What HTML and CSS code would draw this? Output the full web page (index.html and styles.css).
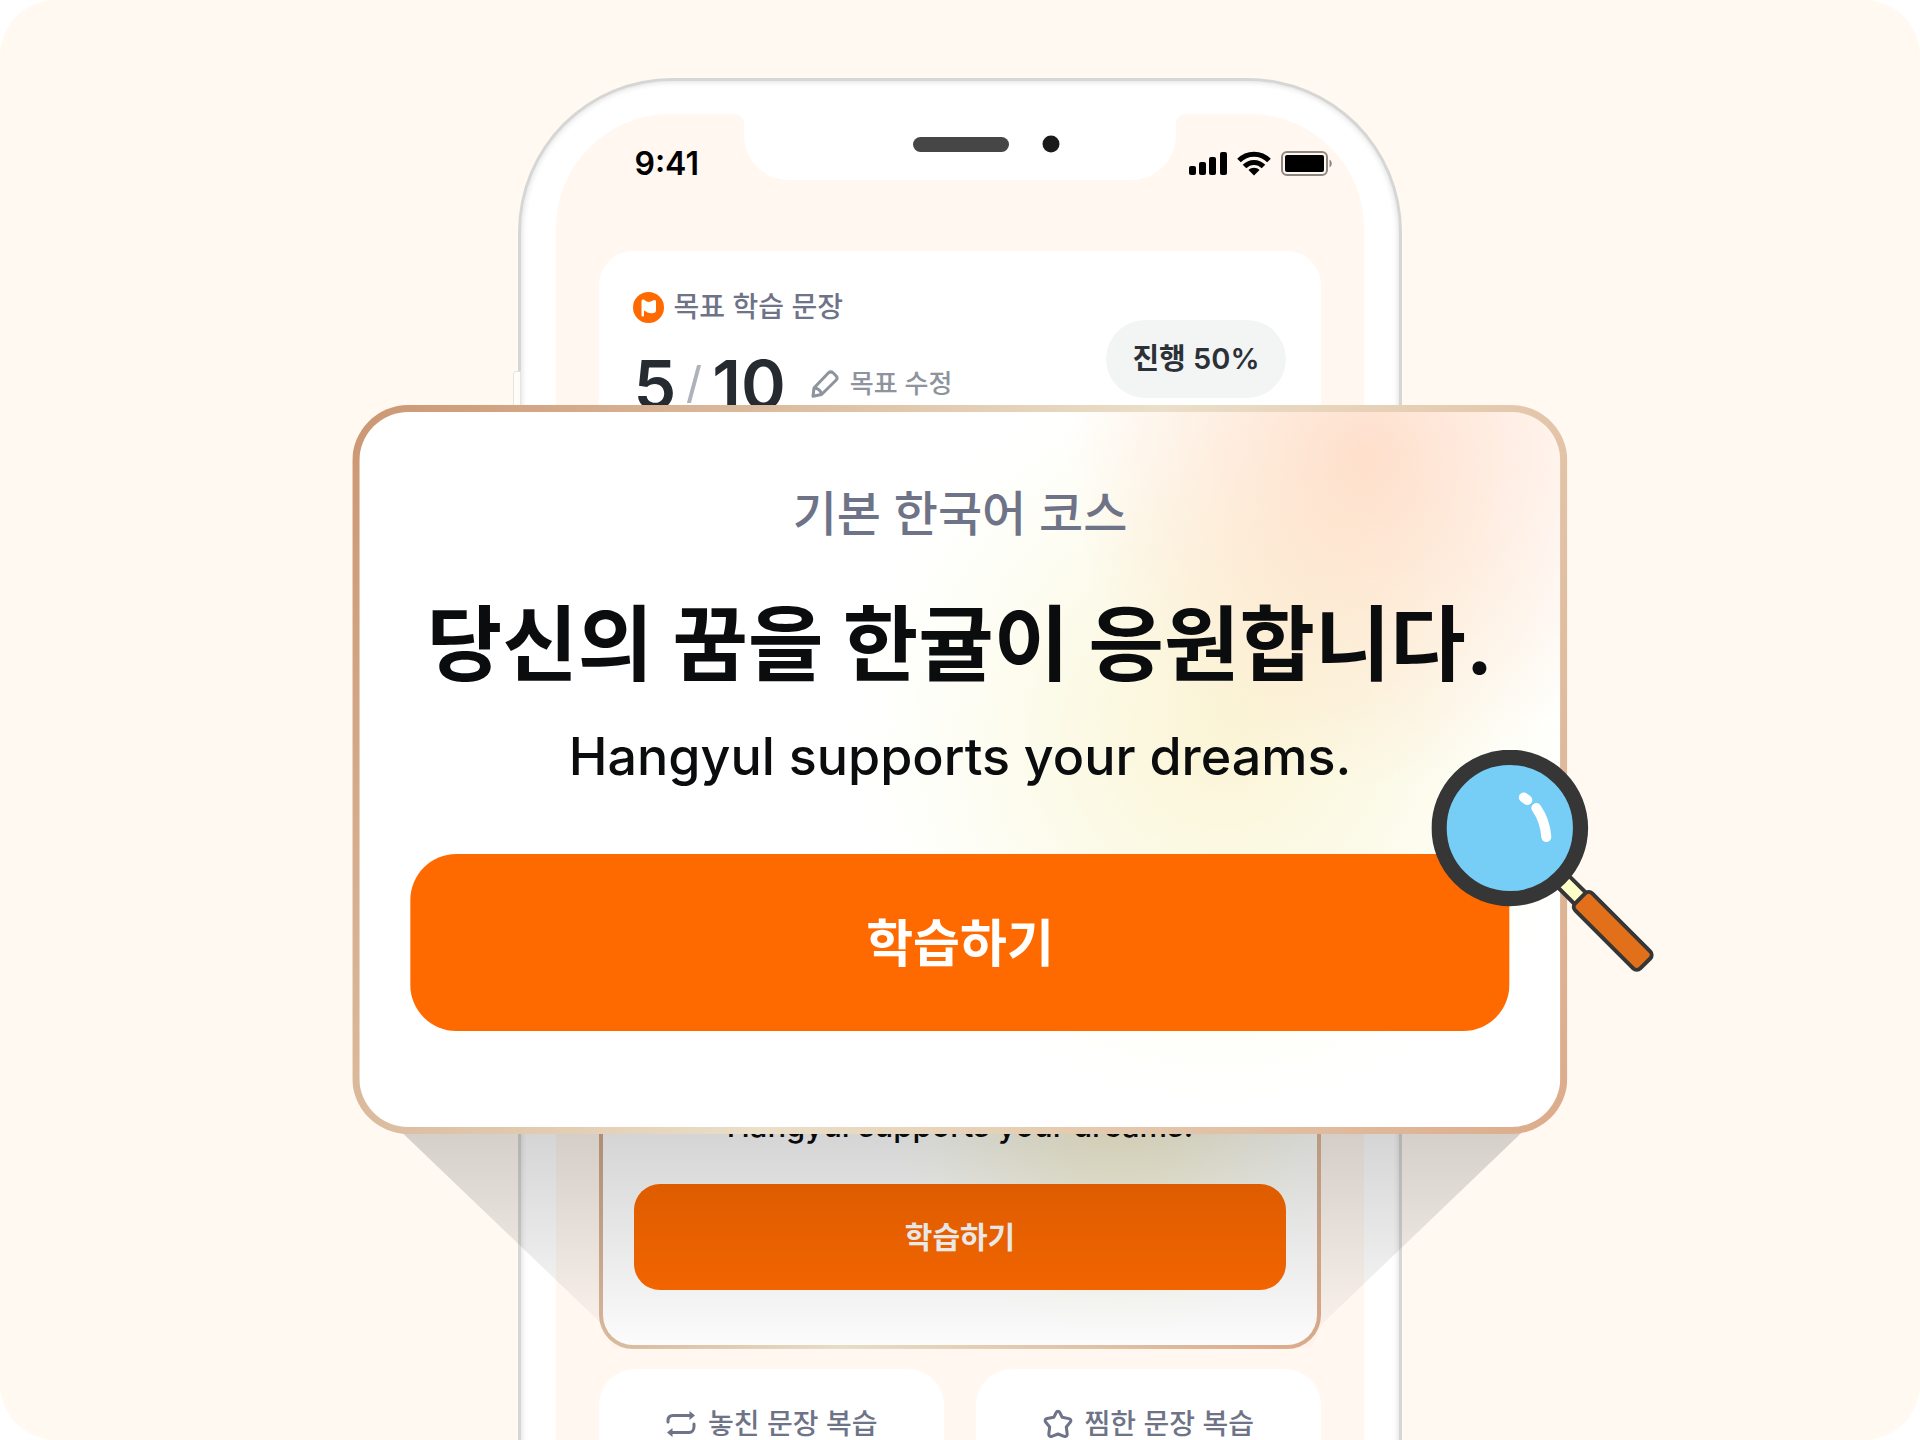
FILE: index.html
```html
<!DOCTYPE html>
<html lang="ko">
<head>
  <meta charset="UTF-8">
  <meta name="viewport" content="width=device-width, initial-scale=1">
  <title>한귤 - 기본 한국어 코스</title>
  <link rel="stylesheet" href="styles.css">
</head>
<body>

<main class="stage">

  <!-- Phone -->
  <div class="phone">
    <div class="screen">
      <svg class="notch" viewBox="0 0 454 66" width="454" height="66" aria-hidden="true">
        <path d="M0 0C7 0 11 4 11 11V20C11 46 30 66 56 66H398C424 66 443 46 443 20V11C443 4 447 0 454 0Z" fill="#fff"/>
        <rect x="180" y="23" width="96" height="15" rx="7.5" fill="#464646"/>
        <circle cx="318" cy="30" r="8.5" fill="#1a1a1a"/>
      </svg>

      <header class="status">
        <span class="time">9:41</span>
        <span class="status-icons">
          <svg width="38" height="25" viewBox="0 0 38 25" aria-hidden="true">
            <rect x="0" y="15" width="7" height="9" rx="2"/>
            <rect x="10" y="11" width="7" height="13" rx="2"/>
            <rect x="20" y="6" width="7" height="18" rx="2"/>
            <rect x="31" y="1" width="7" height="23" rx="2"/>
          </svg>
          <svg width="34" height="25" viewBox="0 0 34 25" aria-hidden="true">
            <g fill="none" stroke="#000" stroke-width="5">
              <path d="M2 9.500C10 1 24 1 32 9.500"/>
              <path d="M7.500 15.500C13 10 21 10 26.500 15.500"/>
            </g>
            <path d="M17 24.500L11.500 19C14.500 16 19.500 16 22.500 19Z"/>
          </svg>
          <svg width="52" height="25" viewBox="0 0 52 25" aria-hidden="true">
            <rect x="1" y="1" width="45" height="23" rx="5" fill="none" stroke="#8d8782" stroke-width="2"/>
            <rect x="4" y="4" width="39" height="17" rx="2"/>
            <path d="M48.500 8.500C51.500 10 51.500 15 48.500 16.500Z" fill="#8d8782"/>
          </svg>
        </span>
      </header>

      <section class="goal">
        <div>
          <h2 class="goal-title">
            <svg width="31" height="31" viewBox="0 0 31 31" aria-hidden="true">
              <circle cx="15.500" cy="15.500" r="15.500" fill="#ff6a00"/>
              <path d="M8.500 9.500C8.500 7.500 10 7 11.500 8C14 10.500 17 10.500 20 8.500C21.500 7.500 23 8 23 9.500V18C23 20 22 21 20.500 21C17 22 14 20.500 11 18.500V23C11 25 8.500 25 8.500 23Z" fill="#fff"/>
            </svg>
            목표 학습 문장
          </h2>
          <div class="goal-row">
            <p class="count">5<i></i>10</p>
            <button class="edit" type="button">
              <svg width="28" height="28" viewBox="0 0 28 28" fill="none" stroke="#8e949d" stroke-width="3" stroke-linejoin="round" aria-hidden="true">
                <path d="M3 18L17.500 2.800C19 1.500 20.500 1.500 22 2.800L25.200 6C26.500 7.500 26.500 8.500 25.200 10L10.500 24.500L2 26.200Z"/>
                <path d="M3 18C7.500 18.500 10 20.500 10.500 24.500"/>
              </svg>
              목표 수정
            </button>
          </div>
        </div>
        <span class="badge">진행 50%</span>
      </section>

      <section class="course course-small">
        <p class="course-en">Hangyul supports your dreams.</p>
        <button class="study" type="button">학습하기</button>
      </section>

      <nav class="review">
        <button class="review-item" type="button">
          <svg width="30" height="28" viewBox="0 0 30 28" fill="none" stroke="#6e7387" stroke-width="3" stroke-linecap="round" aria-hidden="true">
            <path d="M2 12V10.500C2 7 4 5.500 7 5.500H24"/>
            <path d="M28 14V16.500C28 20 26 22.500 23 22.500H6"/>
            <path d="M23.500 1L29 5.500L23.500 10ZM6.500 18L1 22.500L6.500 27Z" fill="#6e7387" stroke="none"/>
          </svg>
          놓친 문장 복습
        </button>
        <button class="review-item" type="button">
          <svg width="30" height="30" viewBox="0 0 30 30" fill="none" stroke="#6e7387" stroke-width="3" stroke-linejoin="round" aria-hidden="true">
            <path d="M13.200 3.500C14 1.800 16 1.800 16.800 3.500L19.200 8.300L25.800 9.600C28 10 28.500 11.800 27.200 13.300L23.300 18L24.200 25C24.300 27 23 28 21.200 27.300L15 25L8.800 27.300C7 28 5.700 27 5.800 25L6.700 18L2.800 13.300C1.500 11.800 2 10 4.200 9.600L10.800 8.300Z"/>
          </svg>
          찜한 문장 복습
        </button>
      </nav>
    </div>
  </div>

  <!-- Beam between the small card and the enlarged one -->
  <div class="beam"></div>

  <!-- Enlarged card -->
  <section class="course course-large">
    <p class="course-name">기본 한국어 코스</p>
    <h1 class="course-title">당신의 꿈을 한귤이 응원합니다.</h1>
    <p class="course-en">Hangyul supports your dreams.</p>
    <button class="study" type="button">학습하기</button>

    <svg class="magnifier" width="226" height="226" viewBox="0 0 226 226" aria-hidden="true">
      <g transform="rotate(45 78.500 78)" stroke="#363636" stroke-width="4">
        <rect x="154" y="70" width="26" height="16" fill="#fdffc8"/>
        <rect x="178" y="66" width="92" height="24" rx="5" fill="#e2701b"/>
      </g>
      <circle cx="78.500" cy="78" r="70.700" fill="#76cef7" stroke="#363636" stroke-width="15.200"/>
      <path d="M92.500 47.500L96 50M105 58Q114 71 115 87" fill="none" stroke="#fff" stroke-width="10" stroke-linecap="round"/>
    </svg>
  </section>

</main>

</body>
</html>
```
FILE: styles.css
```css
* {
  box-sizing: border-box;
}

body {
  margin: 0;
  background: #fff;
  font-family: Inter, 'Noto Sans CJK KR', sans-serif;
  color: #0b0c0e;
}

h1, h2, h3, p {
  margin: 0;
}

button {
  border: none;
  background: none;
  padding: 0;
  font-family: inherit;
  cursor: pointer;
}

svg {
  flex-shrink: 0;
}

.stage {
  position: relative;
  height: 100vh;
  padding-top: 78px;
  background: #fff9f2;
  border-radius: 56px;
  overflow: hidden;
}

/* phone */
.phone {
  position: relative;
  width: 46%;
  margin: 0 auto;
  padding: 33px 35px 0;
  background: #fff;
  border: 3px solid #d6d6d5;
  border-bottom: none;
  border-radius: 154px 154px 0 0;
  box-shadow: inset 0 0 6px rgba(0, 0, 0, 0.16);
}

.phone::before {
  content: "";
  position: absolute;
  left: -8px;
  top: 290px;
  width: 6px;
  height: 110px;
  background: #fffdfa;
  border: 1px solid #e6e4e0;
  border-radius: 3px 0 0 3px;
}

.screen {
  position: relative;
  padding: 0 43px 60px;
  background: #fff7f0;
  border-radius: 114px 114px 0 0;
}

.notch {
  position: absolute;
  top: 0;
  left: 50%;
  transform: translateX(-50%);
}

.status {
  display: flex;
  justify-content: space-between;
  align-items: flex-start;
  height: 137px;
  padding: 34px 0 0 35px;
}

.time {
  font-size: 32px;
  line-height: 32px;
  font-weight: 600;
  color: #000;
}

.status-icons {
  display: flex;
  gap: 10px;
  margin: 3px -12px 0 0;
}

/* goal card */
.goal {
  display: flex;
  justify-content: space-between;
  align-items: flex-start;
  min-height: 646px;
  padding: 40px 35px 40px 34px;
  background: #fff;
  border-radius: 34px;
}

.goal-title {
  display: flex;
  align-items: center;
  gap: 9px;
  font-size: 28px;
  line-height: 32px;
  font-weight: 500;
  color: #6e7387;
}

.goal-row {
  display: flex;
  align-items: center;
  gap: 25px;
  margin-top: 29px;
}

.count {
  display: flex;
  align-items: center;
  font-size: 68px;
  line-height: 64px;
  font-weight: 600;
  color: #262b31;
}

.count i {
  width: 4px;
  height: 38px;
  margin: 0 16px;
  background: #adb3ba;
  transform: skewX(-15deg);
}

.edit {
  display: flex;
  align-items: center;
  gap: 11px;
  font-size: 26px;
  line-height: 32px;
  font-weight: 500;
  color: #8e949d;
}

.badge {
  margin-top: 29px;
  padding: 0 26px;
  background: #f3f5f4;
  border-radius: 39px;
  font-size: 29px;
  line-height: 78px;
  font-weight: 600;
  color: #2c3138;
}

/* course card */
.course {
  display: flex;
  flex-direction: column;
  border: 4px solid transparent;
  border-radius: 34px;
  background:
    radial-gradient(25% 46% at 84% 6%, rgba(255, 190, 152, 0.48), rgba(255, 205, 175, 0.32) 50%, rgba(255, 220, 200, 0)) padding-box,
    radial-gradient(31% 52% at 72% 45%, #fbf5d6, #fcfae8 45%, #fefef7 75%, #fff) padding-box,
    linear-gradient(119deg, #cc9672, #eadfc8 50%, #dcab8a) border-box;
  text-align: center;
}

.course-small {
  justify-content: flex-end;
  min-height: 432px;
  margin-top: 20px;
  padding: 44px 31px 55px;
}

.course-name {
  font-size: 48px;
  line-height: 56px;
  font-weight: 500;
  color: #6e7387;
}

.course-title {
  margin-top: 55px;
  font-size: 82px;
  line-height: 96px;
  font-weight: 700;
  white-space: nowrap;
}

.course-en {
  font-size: 31px;
  line-height: 38px;
  font-weight: 500;
}

.study {
  margin-top: 39px;
  background: #ff6a00;
  border-radius: 26px;
  font-size: 30px;
  line-height: 106px;
  font-weight: 600;
  color: #fff;
}

.course-large {
  position: absolute;
  top: 405px;
  left: 50%;
  width: 63.300%;
  transform: translateX(-50%);
  padding: 74px 51px 96px;
  border-width: 7px;
  border-radius: 56px;
}

.course-large .course-en {
  margin-top: 32px;
  font-size: 52px;
  line-height: 64px;
}

.course-large .study {
  height: 177px;
  margin-top: 65px;
  padding-top: 3px;
  border-radius: 46px;
  font-size: 51px;
  line-height: 174px;
}

.magnifier {
  position: absolute;
  top: 338px;
  right: -97px;
}

.beam {
  position: absolute;
  top: 1130px;
  left: 20.800%;
  width: 58.600%;
  height: 218px;
  background: linear-gradient(rgba(0, 0, 0, 0.17), rgba(0, 0, 0, 0.01));
  clip-path: polygon(0 0, 100% 0, 82% 89%, 81% 100%, 19% 100%, 18% 89%);
}

/* review buttons */
.review {
  display: grid;
  grid-template-columns: 1fr 1fr;
  gap: 32px;
  margin-top: 20px;
}

.review-item {
  display: flex;
  justify-content: center;
  align-items: center;
  gap: 12px;
  padding: 38px 0;
  background: #fff;
  border-radius: 36px;
  font-size: 28px;
  line-height: 34px;
  font-weight: 500;
  color: #6e7387;
}
```
